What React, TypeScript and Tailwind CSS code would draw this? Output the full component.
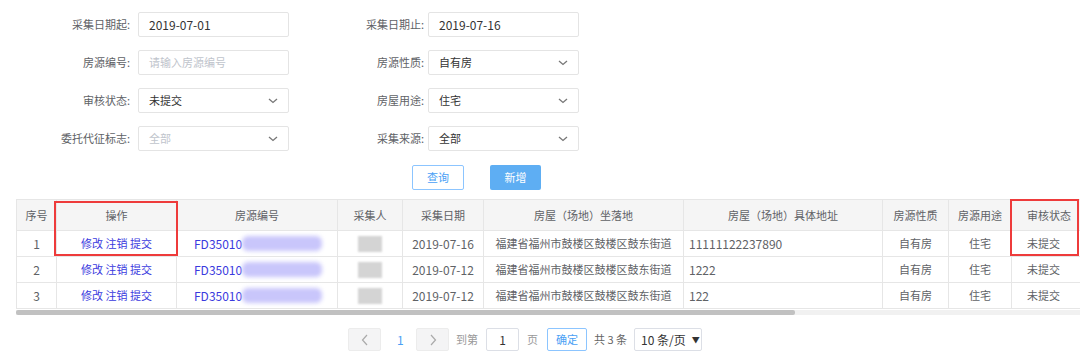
import React from 'react';

const font = { fontFamily: '"Noto Sans CJK SC", "Noto Sans", sans-serif' };

const Chevron = () => (
    <svg width="10" height="6" viewBox="0 0 10 6" className="absolute right-[10px] top-[9px]">
        <path d="M1 1l4 3.5L9 1" fill="none" stroke="#777" strokeWidth="1.3" />
    </svg>
);

interface FieldProps {
    label: string;
    value?: string;
    placeholder?: string;
    select?: boolean;
    latin?: boolean;
    labelWidth: string;
    gap: string;
}

const Field: React.FC<FieldProps> = ({ label, value, placeholder, select, latin, labelWidth, gap }) => (
    <div className="flex items-center">
        <div className={`${labelWidth} text-right text-[11px] text-[#606266]`}>{label}</div>
        <div className={`${gap} relative w-[151px] h-[25px] border border-[#e4e4e4] rounded-[2px] bg-white flex items-center px-[10px]`}>
            {value ? <span className={`text-[#333] ${latin ? 'text-[12px]' : 'text-[11px]'}`}>{value}</span> : <span className="text-[11px] text-[#c0c4cc]">{placeholder}</span>}
            {select && <Chevron />}
        </div>
    </div>
);

const rows = [
    { no: 1, date: '2019-07-16', addr: '11111122237890' },
    { no: 2, date: '2019-07-12', addr: '1222' },
    { no: 3, date: '2019-07-12', addr: '122' },
];

const cell = 'border border-[#e6e6e6]';

const App: React.FC = () => {
    return (
        <div className="w-[1080px] h-[352px] bg-white overflow-hidden relative text-[11px]" style={font}>
            {/* search form */}
            <div className="flex flex-col gap-[13px] pt-[12px]">
                <div className="flex">
                    <Field label="采集日期起:" value="2019-07-01" latin labelWidth="w-[130px]" gap="ml-[8px]" />
                    <Field label="采集日期止:" value="2019-07-16" latin labelWidth="w-[135px]" gap="ml-[4px]" />
                </div>
                <div className="flex">
                    <Field label="房源编号:" placeholder="请输入房源编号" labelWidth="w-[130px]" gap="ml-[8px]" />
                    <Field label="房源性质:" value="自有房" select labelWidth="w-[135px]" gap="ml-[4px]" />
                </div>
                <div className="flex">
                    <Field label="审核状态:" value="未提交" select labelWidth="w-[130px]" gap="ml-[8px]" />
                    <Field label="房屋用途:" value="住宅" select labelWidth="w-[135px]" gap="ml-[4px]" />
                </div>
                <div className="flex">
                    <Field label="委托代征标志:" placeholder="全部" select labelWidth="w-[130px]" gap="ml-[8px]" />
                    <Field label="采集来源:" value="全部" select labelWidth="w-[135px]" gap="ml-[4px]" />
                </div>
            </div>

            <div className="flex pl-[412px] gap-[26px] mt-[14px]">
                <button className="w-[52px] h-[25px] border border-[#8cc5ff] rounded-[2px] text-[11px] text-[#4a9ff5] bg-white">查询</button>
                <button className="w-[51px] h-[25px] rounded-[2px] text-[11px] text-white bg-[#5eaef3]">新增</button>
            </div>

            {/* table */}
            <div className="ml-[16px] mt-[9px] w-[1064px] overflow-hidden relative">
                <table className="table-fixed border-collapse text-[11px] text-[#606266] w-[1140px]">
                    <colgroup>
                        <col className="w-[40px]" />
                        <col className="w-[120px]" />
                        <col className="w-[161px]" />
                        <col className="w-[65px]" />
                        <col className="w-[81px]" />
                        <col className="w-[200px]" />
                        <col className="w-[199px]" />
                        <col className="w-[66px]" />
                        <col className="w-[63px]" />
                        <col className="w-[145px]" />
                    </colgroup>
                    <thead>
                        <tr className="h-[31px] bg-[#f5f5f5]">
                            {['序号', '操作', '房源编号', '采集人', '采集日期', '房屋（场地）坐落地', '房屋（场地）具体地址', '房源性质', '房源用途', '审核状态'].map((h, i) => (
                                <th key={h} className={`${cell} font-normal ${i === 9 ? 'text-left pl-[15px]' : 'text-center'}`}>{h}</th>
                            ))}
                        </tr>
                    </thead>
                    <tbody>
                        {rows.map(r => (
                            <tr key={r.no} className="h-[26px]">
                                <td className={`${cell} text-center text-[12px]`}>{r.no}</td>
                                <td className={`${cell} text-center text-[#3a3ade]`}>修改 注销 提交</td>
                                <td className={`${cell} pl-[17px] text-[12px] text-[#3a3ade]`}>
                                    <div className="flex items-center">
                                        <span>FD35010</span>
                                        <span className="w-[80px] h-[15px] rounded-[6px] bg-[#c9c6fb] blur-[2px]" />
                                    </div>
                                </td>
                                <td className={cell}>
                                    <div className="ml-[20px] w-[24px] h-[16px] bg-[#d4d4d4] blur-[1px]" />
                                </td>
                                <td className={`${cell} text-center text-[12px]`}>{r.date}</td>
                                <td className={`${cell} text-center`}>福建省福州市鼓楼区鼓楼区鼓东街道</td>
                                <td className={`${cell} pl-[5px] text-[12px]`}>{r.addr}</td>
                                <td className={`${cell} text-center`}>自有房</td>
                                <td className={`${cell} text-center`}>住宅</td>
                                <td className={`${cell} text-left pl-[15px]`}>未提交</td>
                            </tr>
                        ))}
                    </tbody>
                </table>
                {/* scrollbar */}
                <div className="h-[5px] bg-[#f1f1f1] mt-[1px]">
                    <div className="w-[779px] h-[5px] bg-[#c1c1c1] rounded-[2px]" />
                </div>
            </div>

            {/* annotations */}
            <div className="absolute left-[54px] top-[201px] w-[124px] h-[55px] border-2 border-[#ee3b3b]" />
            <div className="absolute left-[1010px] top-[199px] w-[69px] h-[57px] border-2 border-[#ee3b3b]" />

            {/* pagination */}
            <div className="flex items-center pl-[348px] mt-[13px] text-[#999]">
                <div className="w-[33px] h-[23px] bg-[#f4f4f5] border border-[#ececec] rounded-[2px] flex items-center justify-center">
                    <svg width="8" height="12" viewBox="0 0 8 12"><path d="M6 1L1.5 6 6 11" fill="none" stroke="#aaa" strokeWidth="1.2" /></svg>
                </div>
                <span className="ml-[16px] w-[17px] text-[12px] text-[#4a9ff5]">1</span>
                <div className="ml-[2px] w-[33px] h-[23px] bg-[#f4f4f5] border border-[#ececec] rounded-[2px] flex items-center justify-center">
                    <svg width="8" height="12" viewBox="0 0 8 12"><path d="M2 1l4.5 5L2 11" fill="none" stroke="#aaa" strokeWidth="1.2" /></svg>
                </div>
                <span className="ml-[7px]">到第</span>
                <div className="ml-[8px] w-[33px] h-[23px] border border-[#dcdfe6] rounded-[2px] flex items-center justify-center text-[12px] text-[#333]">1</div>
                <span className="ml-[8px]">页</span>
                <div className="ml-[9px] w-[40px] h-[23px] border border-[#8cc5ff] rounded-[2px] flex items-center justify-center text-[#4a9ff5]">确定</div>
                <span className="ml-[7px] text-[#666]">共 3 条</span>
                <div className="ml-[7px] w-[68px] h-[23px] border border-[#dcdfe6] rounded-[2px] flex items-center pl-[6px] text-[12px] text-[#333]">
                    10 条/页 <span className="ml-[6px] text-[8px]">▼</span>
                </div>
            </div>
        </div>
    );
};

export default App;
